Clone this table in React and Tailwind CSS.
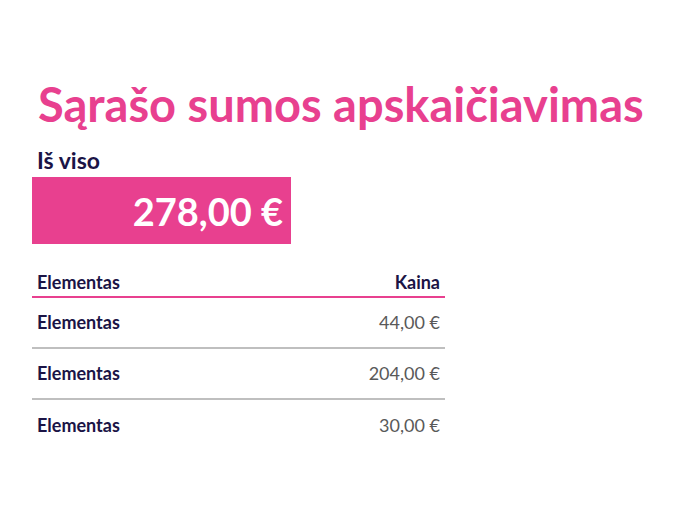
const items = [
  { name: "Elementas", price: "44,00 €" },
  { name: "Elementas", price: "204,00 €" },
  { name: "Elementas", price: "30,00 €" },
];

export default function App() {
  return (
    <div className="w-[675px] h-[520px] bg-white font-['Lato',sans-serif] pl-[32px] pt-[76px]">
      <h1 className="text-[47px] leading-[56px] font-bold text-[#e8408f] pl-[6px]">
        Sąrašo sumos apskaičiavimas
      </h1>

      <div className="mt-[14px] pl-[5px] text-[23px] leading-[28px] font-bold text-[#1b1446]">
        Iš viso
      </div>
      <div className="mt-[3px] w-[259px] h-[67px] bg-[#e8408f] flex items-center justify-end pr-[8px]">
        <span className="text-[38px] font-bold text-white leading-none">278,00 €</span>
      </div>

      <div className="mt-[26px] w-[413px]">
        <div className="flex justify-between px-[5px] pb-[2px] border-b-2 border-[#e8408f] text-[18px] leading-[24px] font-bold text-[#1b1446]">
          <span>Elementas</span>
          <span>Kaina</span>
        </div>
        {items.map((it, i) => (
          <div
            key={i}
            className={
              "flex justify-between items-center px-[5px] h-[51px] text-[18px] " +
              (i < items.length - 1 ? "border-b-2 border-[#bfbfbf]" : "")
            }
          >
            <span className="font-bold text-[#1b1446]">{it.name}</span>
            <span className="text-[#595959]">{it.price}</span>
          </div>
        ))}
      </div>
    </div>
  );
}
